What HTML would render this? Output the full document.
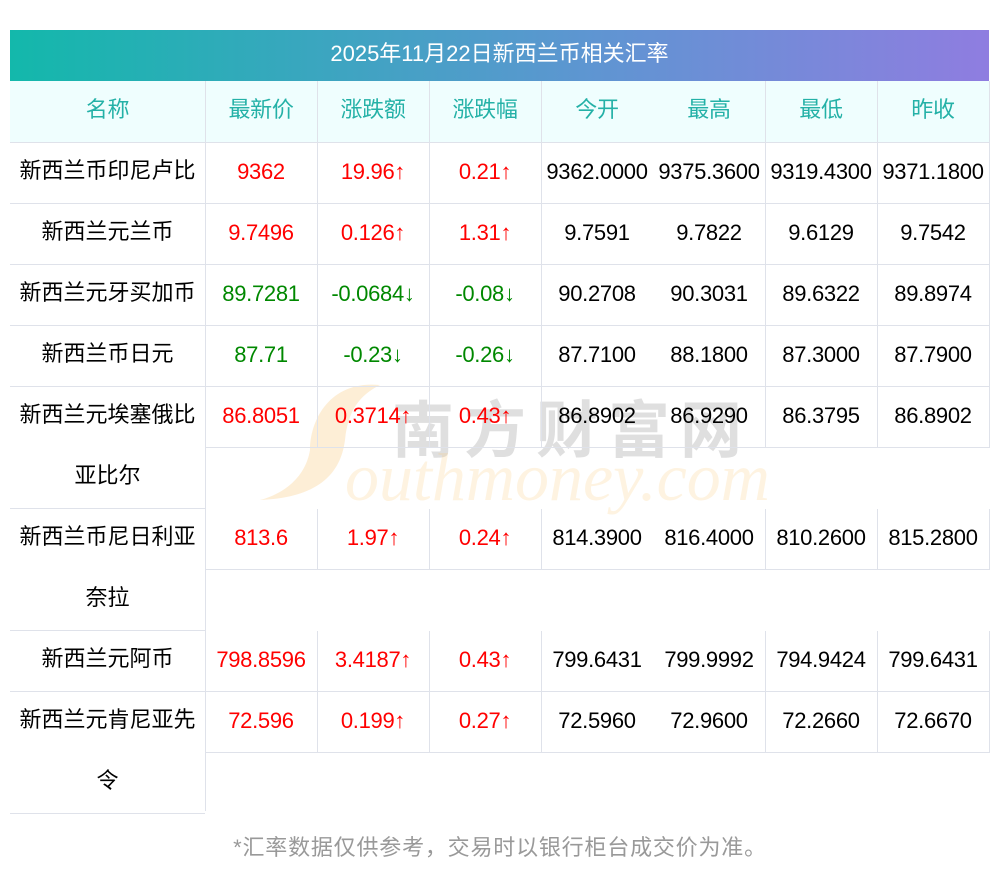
<!DOCTYPE html>
<html><head><meta charset="utf-8"><style>
*{margin:0;padding:0;box-sizing:border-box}
body{width:1000px;height:877px;background:#fff;font-family:"Liberation Sans","Noto Sans CJK SC",sans-serif;position:relative;overflow:hidden}
.a{position:absolute}
.title{left:10px;top:30px;width:979px;height:51px;background:linear-gradient(90deg,#13b8ab,#5f95d2 60%,#8f7de0);color:#fff;font-size:22px;text-align:center;line-height:48px}
.hdr{left:10px;top:81px;width:979px;height:62px;background:#effefe;border-bottom:1px solid #dfe2ea}
.c{position:absolute;text-align:center;font-size:22px;line-height:57px;height:61px;white-space:nowrap;letter-spacing:-0.3px}
.h{color:#24b1a7}
.r{color:#f00}.g{color:#080}.k{color:#000}
.vl{position:absolute;width:1px;background:#dfe2ea}
.hl{position:absolute;height:1px;background:#dfe2ea}
.nm{position:absolute;left:10px;width:195px;text-align:center;font-size:22px;line-height:61px;color:#000;border-bottom:1px solid #dfe2ea;padding-top:0}
.nm span{position:relative;top:-3px}
.wm1{left:392px;top:380px;font-size:62px;color:rgba(150,150,150,.3);letter-spacing:10px;font-weight:bold}
.wm2{left:345px;top:438px;font-size:68px;font-family:"Liberation Serif",serif;font-style:italic;color:rgba(250,200,120,.22)}
.foot{left:0;top:830px;width:1000px;text-align:center;font-size:22px;color:#999;letter-spacing:0.8px}
</style></head><body>
<svg class="a" style="left:250px;top:380px" width="150" height="125"><path d="M130 5 C80 0 60 40 60 70 C55 100 30 115 10 120 C60 118 90 100 95 60 C98 30 110 15 130 5Z" fill="rgba(250,200,120,.3)"/></svg>
<div class="a wm1">南方财富网</div>
<div class="a wm2">outhmoney.com</div>
<div class="a title">2025年11月22日新西兰币相关汇率</div>
<div class="a hdr"></div>
<div class="c h" style="left:10px;top:81px;width:195px">名称</div>
<div class="c h" style="left:205px;top:81px;width:112px">最新价</div>
<div class="c h" style="left:317px;top:81px;width:112px">涨跌额</div>
<div class="c h" style="left:429px;top:81px;width:112px">涨跌幅</div>
<div class="c h" style="left:541px;top:81px;width:112px">今开</div>
<div class="c h" style="left:653px;top:81px;width:112px">最高</div>
<div class="c h" style="left:765px;top:81px;width:112px">最低</div>
<div class="c h" style="left:877px;top:81px;width:112px">昨收</div>
<div class="vl" style="left:205px;top:81px;height:730px"></div>
<div class="vl" style="left:317px;top:81px;height:62px"></div>
<div class="vl" style="left:429px;top:81px;height:62px"></div>
<div class="vl" style="left:541px;top:81px;height:62px"></div>
<div class="vl" style="left:765px;top:81px;height:62px"></div>
<div class="vl" style="left:877px;top:81px;height:62px"></div>
<div class="vl" style="left:989px;top:81px;height:62px"></div>
<div id="rows"></div>
<script>
var d=[
["新西兰币印尼卢比",1,"9362","19.96↑","0.21↑","9362.0000","9375.3600","9319.4300","9371.1800","r"],
["新西兰元兰币",1,"9.7496","0.126↑","1.31↑","9.7591","9.7822","9.6129","9.7542","r"],
["新西兰元牙买加币",1,"89.7281","-0.0684↓","-0.08↓","90.2708","90.3031","89.6322","89.8974","g"],
["新西兰币日元",1,"87.71","-0.23↓","-0.26↓","87.7100","88.1800","87.3000","87.7900","g"],
["新西兰元埃塞俄比<br>亚比尔",2,"86.8051","0.3714↑","0.43↑","86.8902","86.9290","86.3795","86.8902","r"],
["新西兰币尼日利亚<br>奈拉",2,"813.6","1.97↑","0.24↑","814.3900","816.4000","810.2600","815.2800","r"],
["新西兰元阿币",1,"798.8596","3.4187↑","0.43↑","799.6431","799.9992","794.9424","799.6431","r"],
["新西兰元肯尼亚先<br>令",2,"72.596","0.199↑","0.27↑","72.5960","72.9600","72.2660","72.6670","r"]];
var h="",y=143,L=[205,317,429,541,653,765,877];
d.forEach(function(r){
 h+='<div class="nm" style="top:'+y+'px;height:'+(61*r[1])+'px"><span>'+r[0]+'</span></div>';
 for(var i=0;i<7;i++){var cl=i<3?r[9]:"k";h+='<div class="c '+cl+'" style="left:'+L[i]+'px;top:'+y+'px;width:112px">'+r[i+2]+'</div>';}
 [317,429,541,765,877,989].forEach(function(x){h+='<div class="vl" style="left:'+x+'px;top:'+y+'px;height:61px"></div>';});
 h+='<div class="hl" style="left:205px;top:'+(y+60)+'px;width:785px"></div>';
 y+=61*r[1];
});
document.getElementById("rows").innerHTML=h;
</script>
<div class="a foot">*汇率数据仅供参考，交易时以银行柜台成交价为准。</div>
</body></html>
